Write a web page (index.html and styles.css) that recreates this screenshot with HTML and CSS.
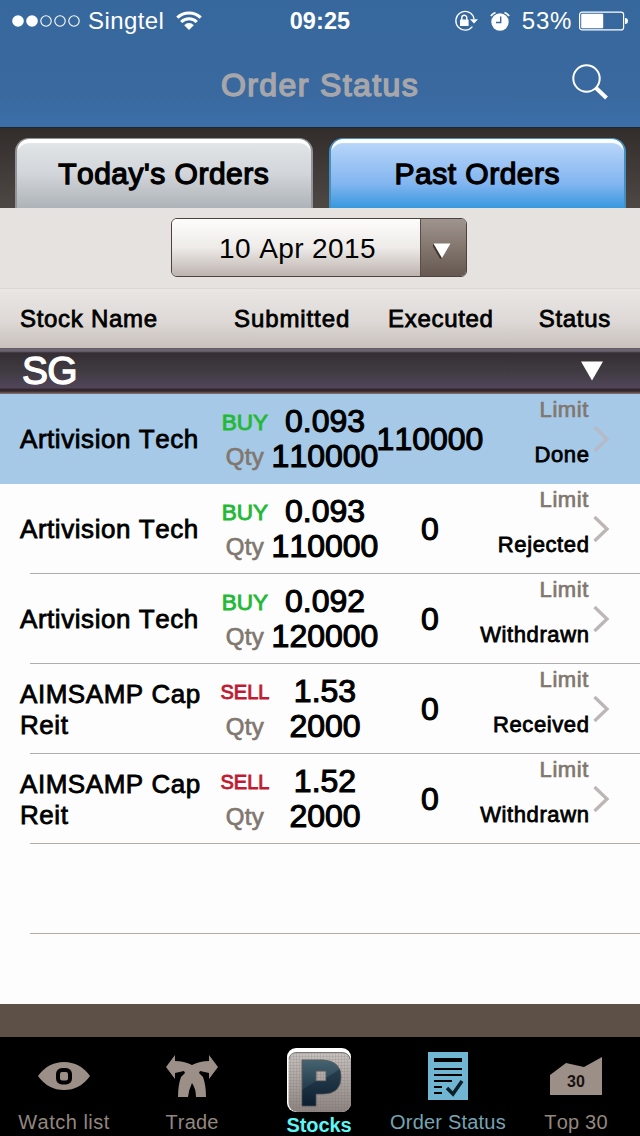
FILE: index.html
```html
<!DOCTYPE html>
<html lang="en">
<head>
  <meta charset="UTF-8">
  <meta name="viewport" content="width=device-width, initial-scale=1.0">
  <title>Order Status</title>
  <link rel="stylesheet" href="styles.css">
</head>
<body>
  <header class="header">
    <div class="status-bar">
      <div class="status-left">
        <svg class="signal" width="68" height="14" viewBox="0 0 68 14">
          <g fill="#fff"><circle cx="6" cy="7" r="5.8"/><circle cx="20" cy="7" r="5.8"/></g>
          <g fill="none" stroke="#fff" stroke-width="1.1"><circle cx="34" cy="7" r="5.2"/><circle cx="48" cy="7" r="5.2"/><circle cx="62" cy="7" r="5.2"/></g>
        </svg>
        <span class="carrier">Singtel</span>
        <svg class="wifi" width="26" height="19" viewBox="0 0 26 19">
          <g fill="none" stroke="#fff" stroke-width="3.1">
            <path d="M1.3 6.6A17 17 0 0 1 24.7 6.6"/>
            <path d="M5.2 11A11 11 0 0 1 20.8 11"/>
          </g>
          <path d="M8.2 14.2A6.5 6.5 0 0 1 17.8 14.2L13 19Z" fill="#fff"/>
        </svg>
      </div>
      <span class="clock">09:25</span>
      <div class="status-right">
        <svg class="lock" width="24" height="22" viewBox="0 0 24 22">
          <path d="M18.4 16.6A9.3 9.3 0 1 1 19.3 6.3L20 9" fill="none" stroke="#fff" stroke-width="1.3"/>
          <path d="M16 9.3H24L20 13.5Z" fill="#fff"/>
          <rect x="6" y="9.5" width="8.6" height="6.5" rx=".6" fill="#fff"/>
          <path d="M7.8 10V7.7a2.5 2.5 0 0 1 5 0V10" fill="none" stroke="#fff" stroke-width="1.4"/>
        </svg>
        <svg class="alarm" width="20" height="20" viewBox="0 0 20 20">
          <circle cx="10" cy="11" r="8.7" fill="#fff"/>
          <path d="M.9 5A11 11 0 0 1 5.5 1.5M19.1 5A11 11 0 0 0 14.5 1.5" fill="none" stroke="#fff" stroke-width="1.8"/>
          <path d="M10.7 5.5V11.5H6" fill="none" stroke="#39699f" stroke-width="1.4"/>
        </svg>
        <span class="percent">53%</span>
        <svg class="battery" width="49" height="20" viewBox="0 0 49 20">
          <rect x=".6" y="1.1" width="44" height="17.8" rx="2.5" fill="none" stroke="#fff" stroke-width="1.2"/>
          <rect x="2.2" y="2.7" width="22" height="14.6" rx="1" fill="#fff"/>
          <path d="M46 7Q49 7 49 10T46 13Z" fill="#fff"/>
        </svg>
      </div>
    </div>
    <div class="title-bar">
      <h1 class="title">Order Status</h1>
      <svg class="search" width="38" height="38" viewBox="0 0 38 38">
        <circle cx="15.5" cy="15.5" r="13.2" fill="none" stroke="#fff" stroke-width="2"/>
        <path d="M24.5 24.5L35.5 35" stroke="#fff" stroke-width="4"/>
      </svg>
    </div>
  </header>

  <nav class="tabs">
    <div class="tab"><span class="tab-label">Today's Orders</span></div>
    <div class="tab active"><span class="tab-label">Past Orders</span></div>
  </nav>

  <div class="date-row">
    <div class="date-select">
      <span class="date-value">10 Apr 2015</span>
      <span class="date-arrow"><svg width="18" height="16" viewBox="0 0 18 16"><path d="M0 1.5L8 15.5" stroke="#40352f" stroke-width="2"/><path d="M.5 .5H17.5L9 15Z" fill="#fff"/></svg></span>
    </div>
  </div>

  <div class="columns">
    <span class="col-name">Stock Name</span>
    <span class="col-submitted">Submitted</span>
    <span class="col-executed">Executed</span>
    <span class="col-status">Status</span>
  </div>

  <div class="market">
    <span class="market-name">SG</span>
    <svg width="22" height="20" viewBox="0 0 22 20"><path d="M0 .5H22L11 19.5Z" fill="#fff"/></svg>
  </div>

  <main class="orders">
    <div class="order selected">
      <div class="name">Artivision Tech</div>
      <div class="labels"><span class="buy">BUY</span><span class="qty">Qty</span></div>
      <div class="values"><span>0.093</span><span>110000</span></div>
      <div class="executed">110000</div>
      <div class="state"><span class="type">Limit</span><span class="result">Done</span></div>
      <svg class="chevron" width="18" height="28" viewBox="0 0 18 28"><path d="M2.5 2L15 14L2.5 26"/></svg>
    </div>
    <div class="order">
      <div class="name">Artivision Tech</div>
      <div class="labels"><span class="buy">BUY</span><span class="qty">Qty</span></div>
      <div class="values"><span>0.093</span><span>110000</span></div>
      <div class="executed">0</div>
      <div class="state"><span class="type">Limit</span><span class="result">Rejected</span></div>
      <svg class="chevron" width="18" height="28" viewBox="0 0 18 28"><path d="M2.5 2L15 14L2.5 26"/></svg>
    </div>
    <div class="order">
      <div class="name">Artivision Tech</div>
      <div class="labels"><span class="buy">BUY</span><span class="qty">Qty</span></div>
      <div class="values"><span>0.092</span><span>120000</span></div>
      <div class="executed">0</div>
      <div class="state"><span class="type">Limit</span><span class="result">Withdrawn</span></div>
      <svg class="chevron" width="18" height="28" viewBox="0 0 18 28"><path d="M2.5 2L15 14L2.5 26"/></svg>
    </div>
    <div class="order">
      <div class="name">AIMSAMP Cap Reit</div>
      <div class="labels"><span class="sell">SELL</span><span class="qty">Qty</span></div>
      <div class="values"><span>1.53</span><span>2000</span></div>
      <div class="executed">0</div>
      <div class="state"><span class="type">Limit</span><span class="result">Received</span></div>
      <svg class="chevron" width="18" height="28" viewBox="0 0 18 28"><path d="M2.5 2L15 14L2.5 26"/></svg>
    </div>
    <div class="order">
      <div class="name">AIMSAMP Cap Reit</div>
      <div class="labels"><span class="sell">SELL</span><span class="qty">Qty</span></div>
      <div class="values"><span>1.52</span><span>2000</span></div>
      <div class="executed">0</div>
      <div class="state"><span class="type">Limit</span><span class="result">Withdrawn</span></div>
      <svg class="chevron" width="18" height="28" viewBox="0 0 18 28"><path d="M2.5 2L15 14L2.5 26"/></svg>
    </div>
    <div class="order"></div>
  </main>

  <div class="strip"></div>

  <footer class="tab-bar">
    <div class="item">
      <svg class="icon" width="64" height="66" viewBox="0 0 64 66">
        <path d="M6 29Q16 15 32 15Q48 15 58 29Q48 43 32 43Q16 43 6 29Z" fill="#9b8f88"/>
        <rect x="26" y="23" width="12" height="12.5" rx="4" fill="none" stroke="#000" stroke-width="4"/>
      </svg>
      <span class="item-label watch">Watch list</span>
    </div>
    <div class="item">
      <svg class="icon" width="64" height="66" viewBox="0 0 64 66">
        <path d="M6 20L15 8V14Q24 14 32 18Q40 14 49 14V8L58 20L49 32V26L40 24L39 26L43 30Q46 38 46 50H36Q36 42 32 36Q29 42 28 50H18Q18 38 21 30L25 26L24 24L15 26V32Z" fill="#9b8f88"/>
      </svg>
      <span class="item-label">Trade</span>
    </div>
    <div class="item main">
      <svg class="icon" width="64" height="66" viewBox="0 0 64 66">
        <defs>
          <linearGradient id="tile" x1="0" y1="0" x2="0" y2="1"><stop offset="0" stop-color="#c8c3c0"/><stop offset="1" stop-color="#8d8480"/></linearGradient>
          <linearGradient id="mark" x1="0" y1="0" x2="0" y2="1"><stop offset="0" stop-color="#456371"/><stop offset="1" stop-color="#102335"/></linearGradient>
          <pattern id="mesh" width="3" height="3" patternUnits="userSpaceOnUse"><path d="M0 .5H3M.5 0V3" stroke="#756d6a" stroke-width=".5" opacity=".4"/></pattern>
        </defs>
        <rect x="0" y="1" width="64" height="64" rx="9" fill="#fff"/>
        <rect x="1.5" y="5" width="62.5" height="60" rx="9" fill="url(#tile)"/>
        <rect x="1.5" y="5" width="62.5" height="60" rx="9" fill="url(#mesh)"/>
        <path d="M2 12Q3 5.5 10 5.5H54Q62 5.5 63 12" fill="none" stroke="#777" stroke-width="1"/>
        <!-- logo mark: bowl, stem and square counter -->
        <path fill-rule="evenodd" d="M15 13H36Q54 14 54 30Q54 47 36 47H29V59H15ZM29 24V34H39V24Z" fill="url(#mark)" stroke="#5a5a5c" stroke-width="1"/>
        <path d="M15 43L29 34V59H15ZM29 34H39V31L53 22Q57 46 36 47H29Z" fill="#0b1b2c" opacity=".4"/>
      </svg>
      <span class="item-label stocks">Stocks</span>
    </div>
    <div class="item">
      <svg class="icon" width="64" height="66" viewBox="0 0 64 66">
        <rect x="12" y="5" width="40" height="48" fill="#70b5d2"/>
        <path d="M18 13H46" stroke="#000" stroke-width="4"/>
        <path d="M18 22H46M18 28H46M18 34H36M18 40H26M18 46H26" stroke="#000" stroke-width="2"/>
        <path d="M31 41L37 47L46 34" fill="none" stroke="#0b1f29" stroke-width="3.5"/>
      </svg>
      <span class="item-label status">Order Status</span>
    </div>
    <div class="item">
      <svg class="icon" width="64" height="66" viewBox="0 0 64 66">
        <path d="M6 28L22 16L40 20L58 10V48H6Z" fill="#9b8f88"/>
        <text class="badge" x="32" y="39.5" text-anchor="middle">30</text>
      </svg>
      <span class="item-label">Top 30</span>
    </div>
  </footer>
</body>
</html>
```
FILE: styles.css
```css
* {
  box-sizing: border-box;
}

body {
  margin: 0;
  width: 640px;
  height: 1136px;
  overflow: hidden;
  font-family: "Liberation Sans", Arial, sans-serif;
  font-kerning: none;
  color: #000;
  background: #fdfdfd;
  white-space: nowrap;
}

svg {
  display: block;
  flex: none;
}

/* Header */
.header {
  height: 128px;
  background: linear-gradient(#37689d 0, #39699f 75%, #3c6fa9 100%);
  border-bottom: 1px solid #1c2733;
}

.status-bar {
  height: 41px;
  padding: 0 12px;
  display: grid;
  grid-template-columns: 1fr 64px 1fr;
  align-items: center;
  color: #fff;
  font-size: 24px;
}

.status-left,
.status-right {
  display: flex;
  align-items: center;
}

.status-right {
  justify-content: flex-end;
}

.carrier {
  margin-left: 8px;
  letter-spacing: 0.4px;
}

.wifi {
  margin-left: 12px;
}

.clock {
  padding-top: 2px;
  font-weight: bold;
  font-size: 23.5px;
  text-align: center;
  letter-spacing: 0.1px;
}

.lock {
  margin-right: 12px;
}

.percent {
  margin-left: 12px;
  letter-spacing: 0.7px;
}

.battery {
  margin-left: 7px;
}

.title-bar {
  height: 86px;
  padding: 0 31px 5px;
  display: grid;
  grid-template-columns: 1fr 204px 1fr;
  align-items: center;
}

.title {
  grid-column: 2;
  margin: 6px 0 0;
  font-size: 32px;
  line-height: 36px;
  font-weight: normal;
  letter-spacing: 1.4px;
  -webkit-text-stroke: 1.5px #a6a6ab;
  text-align: center;
  color: #a6a6ab;
}

.search {
  justify-self: end;
}

/* Tabs */
.tabs {
  height: 80px;
  padding: 10px 14px 0 15px;
  display: flex;
  gap: 16px;
  background: linear-gradient(#322c2b, #4e4845);
}

.tab {
  flex: 1;
  display: flex;
  justify-content: center;
  border: 1px solid #929498;
  border-width: 1px 2px 0;
  border-radius: 14px 14px 0 0;
  background: linear-gradient(#e4e7e9, #d2d5d9 50%, #adb3b8);
  box-shadow: inset 0 5px 1px -1px #fff;
}

.tab.active {
  border-color: #438fbd;
  background: linear-gradient(#bdd8fa, #82b5f0 65%, #3799df);
}

.tab-label {
  margin-top: 17px;
  font-size: 30px;
  line-height: 36px;
  letter-spacing: 0.5px;
  -webkit-text-stroke: 1.3px #000;
}

/* Date picker */
.date-row {
  height: 80px;
  padding-top: 10px;
  display: flex;
  justify-content: center;
  background: #e5e2df;
}

.date-select {
  width: 296px;
  height: 59px;
  margin-right: 2px;
  display: flex;
  border: 1px solid #4c4340;
  border-radius: 6px;
  overflow: hidden;
}

.date-value {
  flex: 1;
  text-align: center;
  font-size: 28px;
  line-height: 60px;
  letter-spacing: 0.4px;
  padding-left: 3px;
  background: linear-gradient(#fdfdfc, #eeebe8 50%, #bdb3af);
}

.date-arrow {
  width: 46px;
  display: flex;
  align-items: center;
  justify-content: center;
  padding: 6px 4px 0 0;
  border-left: 1px solid #594e49;
  background: linear-gradient(#a0948e, #7f736c 55%, #665850);
}

/* Column headings */
.columns {
  height: 60px;
  padding: 0 29px 0 20px;
  display: grid;
  grid-template-columns: 214px 154px 134px 1fr;
  align-items: center;
  font-size: 24px;
  letter-spacing: 0.7px;
  -webkit-text-stroke: 0.8px #000;
  background: linear-gradient(#e9e6e3, #ded9d6 55%, #c8c0bc);
  border-top: 1px solid #dad7d4;
}

.col-submitted {
  letter-spacing: 0.9px;
}

.col-status {
  text-align: right;
}

/* Market section */
.market {
  height: 46px;
  padding: 0 37px 0 22px;
  display: flex;
  align-items: center;
  justify-content: space-between;
  color: #fff;
  background: linear-gradient(#655c69 0, #6f6674 3px, #352d34 5px, #403b42 50%, #50455a 40px, #33262b 41px, #33262b 43px, #8b7774 46px);
}

.market-name {
  font-size: 39px;
  line-height: 44px;
  letter-spacing: -0.8px;
  -webkit-text-stroke: 1.3px #fff;
}

/* Orders */
.orders {
  height: 610px;
  background: #fdfdfd;
}

.order {
  height: 90px;
  padding-left: 20px;
  display: grid;
  grid-template-columns: 190px 70px 90px 120px 99px 1fr;
  align-items: center;
  background: linear-gradient(#b1adab, #b1adab) 30px 89px / 610px 1px no-repeat;
}

.order.selected {
  background: #a5c9e7;
}

.name {
  padding-top: 1px;
  font-size: 26px;
  line-height: 31px;
  letter-spacing: 0.55px;
  white-space: normal;
  -webkit-text-stroke: 0.8px #000;
}

.labels,
.values {
  height: 90px;
  padding-top: 10px;
  display: flex;
  flex-direction: column;
  align-items: center;
  line-height: 35px;
}

.labels {
  padding-top: 11px;
}

.buy {
  font-size: 22.5px;
  color: #22b935;
  -webkit-text-stroke: 0.9px #22b935;
}

.sell {
  font-size: 20px;
  color: #c01b32;
  -webkit-text-stroke: 0.9px #c01b32;
}

.qty {
  margin-top: -1px;
  font-size: 24px;
  letter-spacing: 0.4px;
  color: #81776f;
  -webkit-text-stroke: 0.7px #81776f;
}

.values,
.executed {
  font-size: 32px;
  -webkit-text-stroke: 1.1px #000;
}

.executed {
  display: flex;
  justify-content: center;
}

.state {
  height: 90px;
  padding-top: 4px;
  display: flex;
  flex-direction: column;
  align-items: flex-end;
  gap: 21px;
  font-size: 22px;
  line-height: 24px;
}

.type {
  color: #81776f;
  letter-spacing: 0.6px;
  -webkit-text-stroke: 0.7px #81776f;
}

.result {
  margin-right: -0.5px;
  letter-spacing: 0.6px;
  -webkit-text-stroke: 0.8px #000;
}

.chevron {
  margin-left: 3px;
}

.chevron path {
  fill: none;
  stroke: #bcb6b7;
  stroke-width: 3.3;
}

.selected .chevron path {
  stroke: #b5bac6;
}

/* Bottom */
.strip {
  height: 33px;
  background: #5c5047;
}

.tab-bar {
  height: 99px;
  padding-top: 10px;
  display: grid;
  grid-template-columns: repeat(5, 128px);
  background: #000;
}

.item {
  display: flex;
  flex-direction: column;
  align-items: center;
  color: #93877f;
}

.item.main {
  padding-right: 2px;
}

.item-label {
  margin-top: -2px;
  font-size: 20px;
  line-height: 22px;
  letter-spacing: 0.2px;
}

.watch {
  letter-spacing: 0.5px;
}

.stocks {
  margin-top: 1px;
  font-weight: bold;
  letter-spacing: -0.1px;
  color: #5df5f5;
}

.status {
  color: #75a5b4;
}

.badge {
  font-size: 16px;
  font-weight: bold;
  fill: #19110e;
}
```
